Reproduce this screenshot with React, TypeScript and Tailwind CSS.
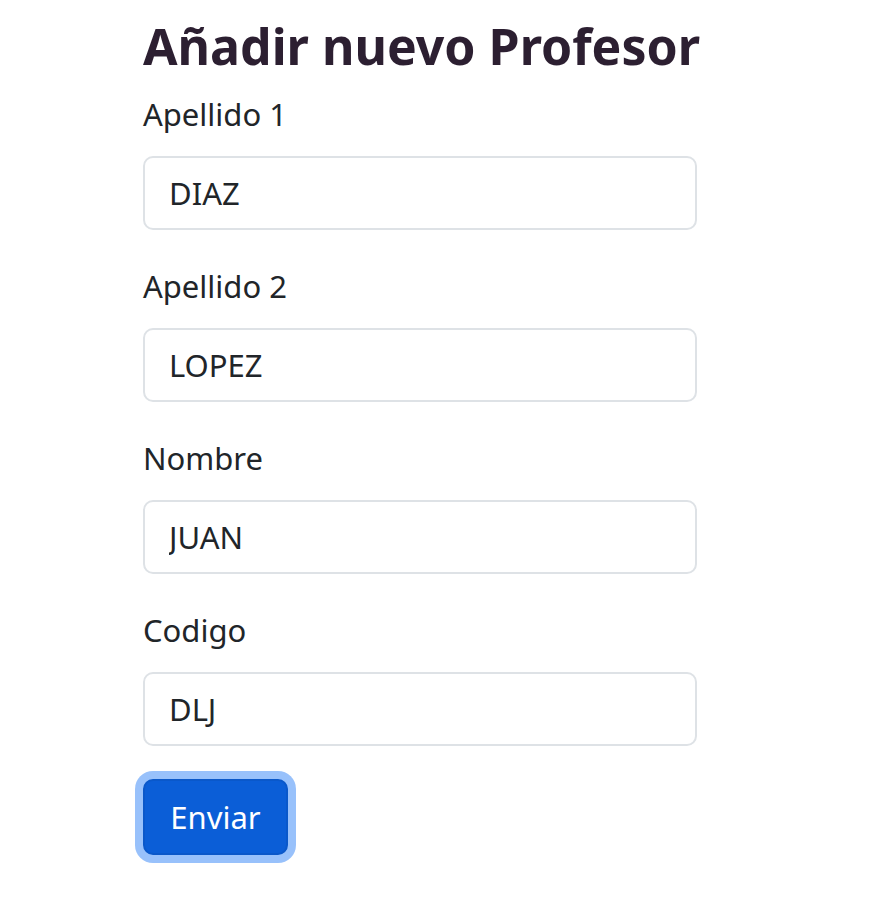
const fields = [
  { label: "Apellido 1", value: "DIAZ" },
  { label: "Apellido 2", value: "LOPEZ" },
  { label: "Nombre", value: "JUAN" },
  { label: "Codigo", value: "DLJ" },
];

export default function App() {
  return (
    <div className="min-h-screen bg-white font-['Noto_Sans',sans-serif]">
      <div className="ml-[143px] w-[554px] pt-[16px]">
        <h1 className="whitespace-nowrap text-[50px] font-bold leading-[60px] text-[#2c1f31]">
          Añadir nuevo Profesor
        </h1>
        <form className="mt-[15px] flex flex-col">
          {fields.map((f) => (
            <div key={f.label} className="mb-[33px] flex flex-col">
              <label className="text-[31px] leading-[46.5px] text-[#212529]">
                {f.label}
              </label>
              <input
                defaultValue={f.value}
                className="mt-[18.5px] h-[74px] w-full rounded-[10px] border-2 border-[#dee2e6] bg-white px-[24px] text-[31px] leading-[46.5px] text-[#212529] outline-none"
              />
            </div>
          ))}
          <div>
            <button
              type="button"
              className="h-[76px] w-[145px] rounded-[10px] border-2 border-[#0a58ca] bg-[#0b5ed7] text-[31px] text-white shadow-[0_0_0_8px_#98c1fb]"
            >
              Enviar
            </button>
          </div>
        </form>
      </div>
    </div>
  );
}
